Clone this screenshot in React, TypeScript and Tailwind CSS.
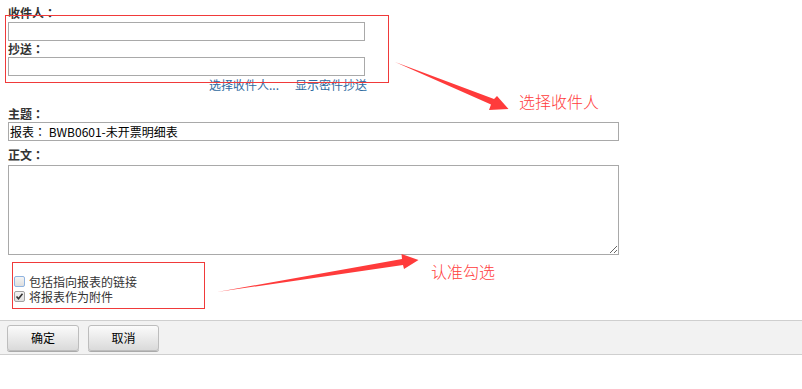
import React from "react";

// the colon is drawn with the TC face so that it sits centred, as in the reference
const Colon: React.FC = () => <span className="font-['Noto_Sans_CJK_TC',sans-serif]">：</span>;

const Label: React.FC<{ text: string; className?: string }> = ({ text, className = "" }) => (
  <div className={`h-[16px] text-[12px] leading-[16px] font-bold text-[#333] ${className}`}>
    {text}
    <Colon />
  </div>
);

const CheckBox: React.FC<{ checked?: boolean; focused?: boolean }> = ({ checked, focused }) => (
  <span
    className={`flex h-[11px] w-[11px] shrink-0 items-center justify-center rounded-[2px] border bg-gradient-to-b from-[#f4f4f4] to-[#dedede] ${
      focused ? "border-[#8fb3e0]" : "border-[#a0a0a0]"
    }`}
  >
    {checked && (
      <svg width="9" height="9" viewBox="0 0 9 9">
        <path d="M1.5 4.5 L3.5 6.8 L7.5 1.8" fill="none" stroke="#333" strokeWidth="1.6" />
      </svg>
    )}
  </span>
);

export default function App() {
  return (
    <div className="relative h-[389px] w-[802px] overflow-hidden bg-white font-['Noto_Sans_CJK_SC',sans-serif]">
      <div className="pl-2 pt-[5px]">
        <Label text="收件人" />
        <div className="mt-[1px] h-[19px] w-[357px] border border-[#a9a9a9] bg-white" />
        <Label text="抄送" />
        <div className="h-[19px] w-[357px] border border-[#a9a9a9] bg-white" />
        <div className="mt-[1px] flex h-[16px] w-[359px] justify-end gap-[16px] text-[12px] leading-[16px] text-[#2f6aa0]">
          <span>选择收件人...</span>
          <span>显示密件抄送</span>
        </div>

        <Label text="主题" className="mt-[13px]" />
        <div className="h-[19px] w-[611px] border border-[#a9a9a9] bg-white px-[1px] text-[12px] leading-[17px] text-black">
          报表<Colon /> BWB0601-未开票明细表
        </div>
        <Label text="正文" className="mt-[6px]" />
        <textarea
          readOnly
          className="mt-[2px] block h-[90px] w-[611px] border border-[#a9a9a9] bg-white outline-none"
        />

        <div className="mt-[19px] flex flex-col pl-[6px] text-[12px] text-[#333]">
          <label className="flex h-[15px] items-center gap-[4px]">
            <CheckBox focused />
            <span className="block leading-[15px]">包括指向报表的链接</span>
          </label>
          <label className="flex h-[15px] items-center gap-[4px]">
            <CheckBox checked />
            <span className="block leading-[15px]">将报表作为附件</span>
          </label>
        </div>
      </div>

      <div className="mt-[16px] flex h-[35px] gap-[9px] border-y border-[#cfcfcf] bg-[#f2f2f2] px-[7px] pt-[4px]">
        <button className="h-[26px] w-[72px] rounded-[3px] border border-[#bdbdbd] bg-gradient-to-b from-[#fbfbfb] to-[#dadada] text-[12px] font-normal text-black shadow-[0_1px_0_#aaa]">
          确定
        </button>
        <button className="h-[26px] w-[71px] rounded-[3px] border border-[#bdbdbd] bg-gradient-to-b from-[#fbfbfb] to-[#dadada] text-[12px] font-normal text-black shadow-[0_1px_0_#aaa]">
          取消
        </button>
      </div>

      {/* annotations drawn over the form */}
      <div className="pointer-events-none absolute left-[5px] top-[15px] h-[68px] w-[384px] border border-[#f03a3a]" />
      <div className="pointer-events-none absolute left-[12px] top-[262px] h-[47px] w-[193px] border border-[#f03a3a]" />

      <svg className="pointer-events-none absolute left-0 top-0" width="802" height="389">
        <polygon points="395,62 494,99 497,96 508.5,109 489,110 491,104.5" fill="#ff3b3b" />
        <polygon points="217,292 402,259 401.5,254 418.5,260 404,269 403,265" fill="#ff3b3b" />
      </svg>

      <span className="absolute left-[519px] top-[91px] text-[16px] leading-[20px] font-light text-[#ff3b3b]">
        选择收件人
      </span>
      <span className="absolute left-[431px] top-[261px] text-[16px] leading-[20px] font-light text-[#ff3b3b]">
        认准勾选
      </span>
    </div>
  );
}
